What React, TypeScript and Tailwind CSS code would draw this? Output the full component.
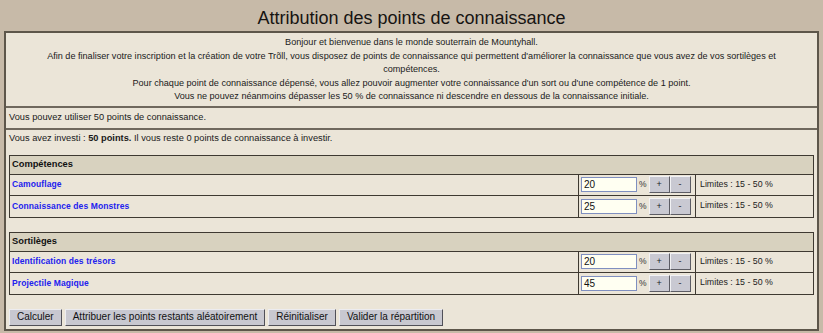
import React from "react";

type Row = { name: string; value: string };

const competences: Row[] = [
  { name: "Camouflage", value: "20" },
  { name: "Connaissance des Monstres", value: "25" },
];

const sortileges: Row[] = [
  { name: "Identification des trésors", value: "20" },
  { name: "Projectile Magique", value: "45" },
];

function SmallBtn({ label }: { label: string }) {
  return (
    <button
      type="button"
      className="h-[17px] w-[21px] flex items-center justify-center bg-[#c9c9d2] border border-t-[#f2f2f4] border-l-[#f2f2f4] border-r-[#5c5c64] border-b-[#5c5c64] text-[9px] leading-none text-[#222]"
    >
      {label}
    </button>
  );
}

function Section({ title, rows }: { title: string; rows: Row[] }) {
  return (
    <div className="w-[805px] border border-[#3e3931]">
      <div className="h-[19px] flex items-center px-[2px] bg-[#d8d2bf] border-b border-[#3e3931] text-[9.3px] font-bold text-[#111]">
        {title}
      </div>
      {rows.map((r, i) => (
        <div
          key={r.name}
          className={
            "h-[21px] flex " + (i < rows.length - 1 ? "border-b border-[#3e3931]" : "")
          }
        >
          <div className="w-[569px] flex items-center px-[2px] border-r border-[#3e3931]">
            <a className="text-[8.5px] font-bold text-[#2222ee] tracking-[0.1px] cursor-pointer">
              {r.name}
            </a>
          </div>
          <div className="w-[117px] flex items-center pl-[2px] border-r border-[#3e3931]">
            <div className="w-[56px] h-[15px] border border-[#7f8fc0] bg-[#fffff2] flex items-center pl-[2px] text-[10px] text-[#111]">
              {r.value}
            </div>
            <span className="ml-[2px] mr-[2px] text-[8.5px] text-[#333]">%</span>
            <SmallBtn label="+" />
            <SmallBtn label="-" />
          </div>
          <div className="flex-1 flex items-center pl-[4px] text-[8.8px] text-[#222]">
            Limites : 15 - 50 %
          </div>
        </div>
      ))}
    </div>
  );
}

function BigBtn({ label }: { label: string }) {
  return (
    <button
      type="button"
      className="h-[17px] px-[7px] flex items-center bg-[#c8c8d0] border border-t-[#ececf0] border-l-[#ececf0] border-r-[#505058] border-b-[#505058] text-[10px] leading-none text-[#111]"
    >
      {label}
    </button>
  );
}

export default function App() {
  return (
    <div className="w-[823px] h-[333px] overflow-hidden bg-[#c7baa8] font-['Liberation_Sans',Arial,sans-serif] text-[#1a1a1a]">
      <div className="h-[31px] flex items-center justify-center pt-[4px]">
        <h1 className="text-[18px] leading-none text-[#161412]">
          Attribution des points de connaissance
        </h1>
      </div>
      <div className="ml-[4px] w-[815px] border-2 border-[#5d564a] bg-[#ebe5d8]">
        <div className="pt-[3px] pb-[2px] text-center text-[9.1px] leading-[13.5px] border-b-2 border-[#6f685d]">
          <p>Bonjour et bienvenue dans le monde souterrain de Mountyhall.</p>
          <p className="px-[28px]">
            Afin de finaliser votre inscription et la création de votre Trõll, vous disposez de
            points de connaissance qui permettent d'améliorer la connaissance que vous avez de vos
            sortilèges et compétences.
          </p>
          <p>
            Pour chaque point de connaissance dépensé, vous allez pouvoir augmenter votre
            connaissance d'un sort ou d'une compétence de 1 point.
          </p>
          <p>
            Vous ne pouvez néanmoins dépasser les 50 % de connaissance ni descendre en dessous de la
            connaissance initiale.
          </p>
        </div>
        <div className="h-[22px] flex items-center px-[3px] text-[9.25px] border-b-2 border-[#6f685d]">
          Vous pouvez utiliser 50 points de connaissance.
        </div>
        <div className="px-[3px] pt-[3px] pb-[3px]">
          <div className="h-[13px] flex items-center text-[9.25px]">
            <span>
              Vous avez investi : <b>50 points.</b> Il vous reste 0 points de connaissance à
              investir.
            </span>
          </div>
          <div className="mt-[9px] flex flex-col gap-[14px]">
            <Section title="Compétences" rows={competences} />
            <Section title="Sortilèges" rows={sortileges} />
          </div>
          <div className="mt-[14px] flex gap-[3px]">
            <BigBtn label="Calculer" />
            <BigBtn label="Attribuer les points restants aléatoirement" />
            <BigBtn label="Réinitialiser" />
            <BigBtn label="Valider la répartition" />
          </div>
        </div>
      </div>
    </div>
  );
}
